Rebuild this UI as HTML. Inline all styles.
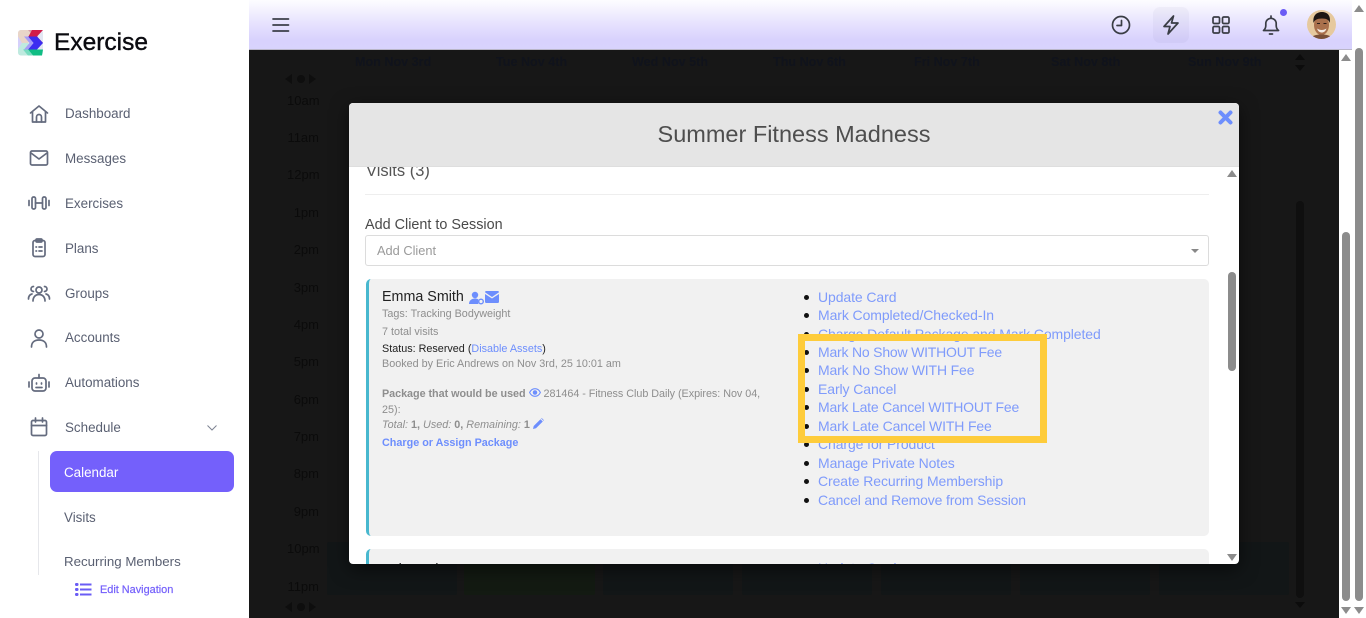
<!DOCTYPE html>
<html lang="en">
<head>
<meta charset="utf-8">
<title>Exercise</title>
<style>
html,body{margin:0;padding:0;width:1366px;height:618px;overflow:hidden;background:#fff;font-family:"Liberation Sans",sans-serif}
.a{position:absolute;white-space:nowrap}
#side{position:absolute;left:0;top:0;width:249px;height:618px;background:#fff}
.nav{position:absolute;left:65px;font-size:13.4px;line-height:20px;color:#5a6072;white-space:nowrap;margin-top:1px}
.ic{position:absolute;left:27px;width:24px;height:24px;fill:none;stroke:#646b7e;stroke-width:1.7;stroke-linecap:round;stroke-linejoin:round}
#top{position:absolute;left:249px;top:0;width:1103px;height:49px;background:linear-gradient(#fdfdff 0,#e8e4fe 22px,#d8d2fd 40px,#d8d3fd 49px);border-bottom:1px solid #b9b6c8}
.tic{position:absolute;width:24px;height:24px;fill:none;stroke:#3a3d45;stroke-width:1.7;stroke-linecap:round;stroke-linejoin:round}
#dark{position:absolute;left:249px;top:50px;width:1090px;height:568px;background:#171717;overflow:hidden}
.day{position:absolute;top:4px;font-size:12.6px;font-weight:bold;color:#10131c;line-height:16px;white-space:nowrap}
.hr{position:absolute;left:38px;width:32px;text-align:right;font-size:13px;color:#0b0b0b;line-height:16px;white-space:nowrap}
.ev{position:absolute;top:492px;height:53px;background:#121617;border-radius:2px}
#modal{position:absolute;left:349px;top:103px;width:890px;height:461px;background:#fff;border-radius:4px;overflow:hidden}
#shadow{position:absolute;left:349px;top:103px;width:890px;height:461px;border-radius:4px;box-shadow:0 5px 18px rgba(0,0,0,.55)}
#mh{position:absolute;left:0;top:0;width:890px;height:63px;background:#e5e5e5;border-bottom:1px solid #dedede;box-sizing:content-box;text-align:center;font-size:23.5px;line-height:62px;color:#4e4e4e;z-index:3}
.lk{color:#6d8efd}
.r{position:absolute;left:469px;font-size:14px;letter-spacing:-.09px;line-height:18px;color:#7f9bfb;white-space:nowrap}
.r:before{content:"";position:absolute;left:-14px;top:7px;width:5px;height:5px;border-radius:50%;background:#111}
.s{font-size:10.8px;line-height:14px;position:absolute;left:33px;white-space:nowrap;color:#8e8e8e}
.sb{position:absolute;background:#8c8c8c;border-radius:5px}
.up,.dn{position:absolute;width:0;height:0;border-left:5px solid transparent;border-right:5px solid transparent}
.up{border-bottom:7px solid #8c8c8c}
.dn{border-top:7px solid #8c8c8c}
</style>
</head>
<body>

<div id="dark">
  <div class="day" style="left:106px">Mon Nov 3rd</div>
  <div class="day" style="left:247px">Tue Nov 4th</div>
  <div class="day" style="left:383px">Wed Nov 5th</div>
  <div class="day" style="left:524px">Thu Nov 6th</div>
  <div class="day" style="left:665px">Fri Nov 7th</div>
  <div class="day" style="left:802px">Sat Nov 8th</div>
  <div class="day" style="left:939px">Sun Nov 9th</div>
  <div class="a" style="left:36px;top:24px;width:0;height:0;border-top:5px solid transparent;border-bottom:5px solid transparent;border-right:7px solid #0e0e0e"></div>
  <div class="a" style="left:48px;top:25px;width:8px;height:8px;border-radius:50%;background:#0e0e0e"></div>
  <div class="a" style="left:60px;top:24px;width:0;height:0;border-top:5px solid transparent;border-bottom:5px solid transparent;border-left:7px solid #0e0e0e"></div>
  <div class="hr" style="top:43px">10am</div>
  <div class="hr" style="top:80px">11am</div>
  <div class="hr" style="top:117px">12pm</div>
  <div class="hr" style="top:155px">1pm</div>
  <div class="hr" style="top:192px">2pm</div>
  <div class="hr" style="top:230px">3pm</div>
  <div class="hr" style="top:267px">4pm</div>
  <div class="hr" style="top:304px">5pm</div>
  <div class="hr" style="top:342px">6pm</div>
  <div class="hr" style="top:379px">7pm</div>
  <div class="hr" style="top:416px">8pm</div>
  <div class="hr" style="top:454px">9pm</div>
  <div class="hr" style="top:491px">10pm</div>
  <div class="hr" style="top:529px">11pm</div>
  <div class="ev" style="left:78px;width:130px"></div>
  <div class="ev" style="left:215px;width:131px;background:#131a12"></div>
  <div class="ev" style="left:354px;width:130px"></div>
  <div class="ev" style="left:493px;width:130px"></div>
  <div class="ev" style="left:632px;width:130px"></div>
  <div class="ev" style="left:771px;width:130px"></div>
  <div class="ev" style="left:910px;width:130px"></div>
  <div class="a" style="left:36px;top:552px;width:0;height:0;border-top:5px solid transparent;border-bottom:5px solid transparent;border-right:7px solid #0e0e0e"></div>
  <div class="a" style="left:48px;top:553px;width:8px;height:8px;border-radius:50%;background:#0e0e0e"></div>
  <div class="a" style="left:60px;top:552px;width:0;height:0;border-top:5px solid transparent;border-bottom:5px solid transparent;border-left:7px solid #0e0e0e"></div>
  <div class="a" style="left:1047px;top:151px;width:8px;height:397px;background:#0f0f0f;border-radius:4px"></div>
  <div class="a" style="left:1046px;top:4px;width:0;height:0;border-left:5px solid transparent;border-right:5px solid transparent;border-bottom:6px solid #0c0c0c"></div>
  <div class="a" style="left:1046px;top:15px;width:0;height:0;border-left:5px solid transparent;border-right:5px solid transparent;border-top:6px solid #0c0c0c"></div>
  <div class="a" style="left:1046px;top:552px;width:0;height:0;border-left:5px solid transparent;border-right:5px solid transparent;border-top:6px solid #0c0c0c"></div>
</div>

<div id="top">
  <svg style="position:absolute;left:20px;top:13px" width="24" height="24" viewBox="0 0 24 24" fill="none" stroke="#3c3f4a" stroke-width="1.7" stroke-linecap="round"><path d="M4 6h15.500M4 12h15.500M4 18h15.500"/></svg>
  <svg class="tic" style="left:860px;top:13px" viewBox="0 0 24 24"><circle cx="12" cy="12" r="8.500"/><path d="M12.500 7.500v5H8"/></svg>
  <div class="a" style="left:904px;top:7px;width:36px;height:36px;border-radius:7px;background:rgba(60,50,110,.04)"></div>
  <svg class="tic" style="left:910px;top:13px" viewBox="0 0 24 24"><path d="M14.500 3 5 13.500h6L9 21l10-11h-6.500z"/></svg>
  <svg class="tic" style="left:960px;top:13px" viewBox="0 0 24 24"><rect x="4" y="4" width="6.500" height="6.500" rx="1.300"/><rect x="13.500" y="4" width="6.500" height="6.500" rx="1.300"/><rect x="4" y="13.500" width="6.500" height="6.500" rx="1.300"/><rect x="13.500" y="13.500" width="6.500" height="6.500" rx="1.300"/></svg>
  <svg class="tic" style="left:1010px;top:13px" viewBox="0 0 24 24"><path d="M4.500 17.500c1.500-1.200 2.300-2.800 2.300-5v-2a5.200 5.200 0 0 1 10.400 0v2c0 2.200.8 3.800 2.300 5z"/><path d="M10.500 21h3M12 3v2"/></svg>
  <div class="a" style="left:1031px;top:9px;width:7px;height:7px;border-radius:50%;background:#6a5cf5"></div>
  <svg style="position:absolute;left:1058px;top:10px" width="29" height="29" viewBox="0 0 29 29">
    <defs><clipPath id="av"><circle cx="14.500" cy="14.500" r="14.500"/></clipPath></defs>
    <g clip-path="url(#av)">
      <rect width="29" height="29" fill="#e6c99e"/>
      <ellipse cx="14.500" cy="15" rx="7.500" ry="10" fill="#a9704c"/>
      <path d="M6.500 13C5.500 5 10 2 15 2s9 3 7.800 11c-1-3-2.800-4.500-7.800-4.500S7.500 10 6.500 13z" fill="#1e1613"/>
      <path d="M10 13.500h3M16.500 13.500h3" stroke="#2b1d17" stroke-width="1.100"/>
      <path d="M10 18.500c3 2 6.500 2 9.500 0-1 3-2.800 4-4.700 4s-3.800-1-4.800-4z" fill="#f4ece4"/>
      <path d="M3 29c2-3.500 6-4.500 11.500-4.500S24 25.500 26 29z" fill="#7a5038"/>
    </g>
  </svg>
</div>

<div id="side">
  <svg style="position:absolute;left:18px;top:30px" width="26" height="26" viewBox="0 0 26 26">
    <rect x="0" y="0" width="25" height="25.500" rx="3" fill="#e3e6f3"/>
    <path d="M0 3a3 3 0 0 1 3-3h7l6 6.500L10 13H0z" fill="#e9d5c8"/>
    <path d="M0 13h10l6 6-6 6.500H3a3 3 0 0 1-3-3z" fill="#bfeadf"/>
    <path d="M0 6.500 4 13 0 19z" fill="#d5d0fb"/>
    <path d="M6 0h8l6 6.500-4 0L10 0z" fill="#d99aa8"/>
    <path d="M14 0h11l-6 6.500 6 6.500h-9l-5.500-6.500z" fill="#d21c4a"/>
    <path d="M10 6.500h9l6 6.500-6 6.500h-9l5.500-6.500z" fill="#3d2df0"/>
    <path d="M10 19.500h15l-1 6h-9z" fill="#0fbd83"/>
    <path d="M6 6.500h4l5.500 6.500-5.500 6.500H6l5.500-6.500z" fill="#a69cf7"/>
    <path d="M5 19.500h5l5 6H10z" fill="#78dcc0"/>
  </svg>
  <div class="a" style="left:54px;top:28px;font-size:24.500px;line-height:30px;color:#0b0b10;-webkit-text-stroke:.4px #0b0b10">Exercise</div>

  <svg class="ic" style="top:102px" viewBox="0 0 24 24"><path d="M3.500 11 12 4l8.500 7M5.500 9.500V20h13V9.500"/><path d="M9.500 20v-5a2.500 2.500 0 0 1 5 0v5"/></svg>
  <div class="nav" style="top:103px">Dashboard</div>
  <svg class="ic" style="top:146px" viewBox="0 0 24 24"><rect x="3.500" y="5" width="17" height="14" rx="1.500"/><path d="M4 7l8 6 8-6"/></svg>
  <div class="nav" style="top:148px">Messages</div>
  <svg class="ic" style="top:191px" viewBox="0 0 24 24"><rect x="5" y="6" width="3.500" height="12" rx="1.500"/><rect x="15.500" y="6" width="3.500" height="12" rx="1.500"/><path d="M8.500 12h7M2 9.500v5M22 9.500v5"/></svg>
  <div class="nav" style="top:193px">Exercises</div>
  <svg class="ic" style="top:236px" viewBox="0 0 24 24"><rect x="6" y="4.500" width="12" height="16" rx="2"/><rect x="9" y="3" width="6" height="3" rx="1"/><path d="M9 11h.5M12 11h3M9 15h.5M12 15h3"/></svg>
  <div class="nav" style="top:238px">Plans</div>
  <svg class="ic" style="top:281px" viewBox="0 0 24 24"><circle cx="12" cy="9" r="3"/><path d="M6 20c0-4 2.500-6.500 6-6.500s6 2.500 6 6.500"/><path d="M6.500 5.500a2.500 2.500 0 0 0 0 5M17.500 5.500a2.500 2.500 0 0 1 0 5M1.500 18c0-3 1.500-4.500 3.500-5M22.500 18c0-3-1.500-4.500-3.500-5"/></svg>
  <div class="nav" style="top:283px">Groups</div>
  <svg class="ic" style="top:326px" viewBox="0 0 24 24"><circle cx="12" cy="8" r="4"/><path d="M4.500 21c0-4.500 3-7 7.500-7s7.500 2.500 7.500 7"/></svg>
  <div class="nav" style="top:327px">Accounts</div>
  <svg class="ic" style="top:371px" viewBox="0 0 24 24"><rect x="5" y="7" width="14" height="13" rx="3"/><path d="M12 3.500V7M2 11v5M22 11v5M9.500 12v1M14.500 12v1M9 16.500h6"/></svg>
  <div class="nav" style="top:372px">Automations</div>
  <svg class="ic" style="top:415px" viewBox="0 0 24 24"><rect x="4.500" y="5.500" width="15" height="15" rx="1.500"/><path d="M4.500 10.500h15M8.500 3v4M15.500 3v4"/></svg>
  <div class="nav" style="top:417px">Schedule</div>
  <svg style="position:absolute;left:206px;top:423px" width="12" height="10" viewBox="0 0 12 10" fill="none" stroke="#7d8392" stroke-width="1"><path d="M1.500 2.500 6 7l4.500-4.500"/></svg>

  <div class="a" style="left:38px;top:451px;width:1px;height:124px;background:#e6e7eb"></div>
  <div class="a" style="left:50px;top:451px;width:184px;height:41px;background:#7460fb;border-radius:7px"></div>
  <div class="nav" style="left:64px;top:462px;color:#fff">Calendar</div>
  <div class="nav" style="left:64px;top:507px">Visits</div>
  <div class="nav" style="left:64px;top:551px;font-size:13.3px">Recurring Members</div>
  <svg style="position:absolute;left:75px;top:582px" width="17" height="15" viewBox="0 0 17 15" fill="#6a5cf5"><rect x="0" y="1" width="3.500" height="3" rx="1.200"/><rect x="0" y="6" width="3.500" height="3" rx="1.200"/><rect x="0" y="11" width="3.500" height="3" rx="1.200"/><rect x="5" y="1.500" width="11.500" height="2"/><rect x="5" y="6.500" width="11.500" height="2"/><rect x="5" y="11.500" width="11.500" height="2"/></svg>
  <div class="a" style="left:100px;top:583px;font-size:10.900px;line-height:14px;color:#7460fb;-webkit-text-stroke:.2px #7460fb">Edit Navigation</div>
</div>

<div id="shadow"></div>
<div id="modal">
  <div id="mh">Summer Fitness Madness</div>
  <svg style="position:absolute;left:869px;top:7px;z-index:4" width="15" height="15" viewBox="0 0 15 15"><path d="M2.500 2.500l10 10M12.500 2.500l-10 10" stroke="#6d8efd" stroke-width="4" stroke-linecap="round"/></svg>

  <div class="a" style="left:17px;top:58px;font-size:16.500px;line-height:20px;color:#555">Visits (3)</div>
  <div class="a" style="left:16px;top:91px;width:844px;height:1px;background:#eee"></div>
  <div class="a" style="left:16px;top:113px;font-size:14.400px;line-height:18px;color:#4a4a4a">Add Client to Session</div>
  <div class="a" style="left:16px;top:132px;width:844px;height:31px;box-sizing:border-box;border:1px solid #dcdcdc;border-radius:3px;background:#fff;font-size:12.800px;line-height:29px;color:#9a9a9a;padding-left:11px">Add Client</div>
  <div class="a" style="left:842px;top:146px;width:0;height:0;border-left:4px solid transparent;border-right:4px solid transparent;border-top:4px solid #888"></div>

  <div class="a" style="left:17px;top:176px;width:843px;height:257px;background:#f1f1f1;border-left:3px solid #48b8cf;border-radius:5px;box-sizing:border-box"></div>
  <div class="a" style="left:33px;top:185px;font-size:14.300px;line-height:18px;color:#222">Emma Smith</div>
  <svg style="position:absolute;left:120px;top:188px" width="15" height="14" viewBox="0 0 15 14" fill="#6d8efd"><circle cx="6" cy="4" r="3.200"/><path d="M0 13c0-3.500 2.500-5.500 6-5.500 1.500 0 2.500.3 3.300.8V13z"/><circle cx="12" cy="10.500" r="2.300" fill="none" stroke="#6d8efd" stroke-width="1.400"/></svg>
  <svg style="position:absolute;left:136px;top:188px" width="14" height="12" viewBox="0 0 14 12" fill="#6d8efd"><path d="M1.200 0h11.600c.7 0 1.200.5 1.200 1.200L7 6 0 1.200C0 .5.500 0 1.200 0z"/><path d="M0 3l7 4.500L14 3v7.800c0 .7-.5 1.200-1.200 1.200H1.200C.5 12 0 11.500 0 10.800z"/></svg>
  <div class="s" style="top:204px">Tags: Tracking Bodyweight</div>
  <div class="s" style="top:222px">7 total visits</div>
  <div class="s" style="top:239px;color:#222">Status: Reserved (<span class="lk">Disable Assets</span>)</div>
  <div class="s" style="top:254px">Booked by Eric Andrews on Nov 3rd, 25 10:01 am</div>
  <div class="s" style="top:284px;letter-spacing:-.04px"><b>Package that would be used</b> <svg width="12" height="9" viewBox="0 0 13 10" style="vertical-align:0"><path d="M.5 5C2 2 4 .8 6.500.8S11 2 12.500 5C11 8 9 9.200 6.500 9.200S2 8 .5 5z" fill="none" stroke="#6d8efd" stroke-width="1.200"/><circle cx="6.500" cy="5" r="2.500" fill="#6d8efd"/></svg> 281464 - Fitness Club Daily (Expires: Nov 04,</div>
  <div class="s" style="top:300px">25):</div>
  <div class="s" style="top:315px"><i>Total:</i> <b>1,</b> <i>Used:</i> <b>0,</b> <i>Remaining:</i> <b>1</b> <svg width="11" height="11" viewBox="0 0 11 11" style="vertical-align:-1px"><path d="M0 11l.7-3L7.500 1.200l2.300 2.300L3 10.300zM8.200.5l.5-.5 2.300 2.300-.5.500z" fill="#6d8efd"/></svg></div>
  <div class="s" style="top:333px;font-weight:bold;color:#6d8efd">Charge or Assign Package</div>

  <div class="r" style="top:185px">Update Card</div>
  <div class="r" style="top:203px">Mark Completed/Checked-In</div>
  <div class="r" style="top:222px">Charge Default Package and Mark Completed</div>
  <div class="r" style="top:240px;letter-spacing:-.2px">Mark No Show WITHOUT Fee</div>
  <div class="r" style="top:258px;letter-spacing:-.15px">Mark No Show WITH Fee</div>
  <div class="r" style="top:277px">Early Cancel</div>
  <div class="r" style="top:295px;letter-spacing:-.2px">Mark Late Cancel WITHOUT Fee</div>
  <div class="r" style="top:314px;letter-spacing:-.15px">Mark Late Cancel WITH Fee</div>
  <div class="r" style="top:332px">Charge for Product</div>
  <div class="r" style="top:351px">Manage Private Notes</div>
  <div class="r" style="top:369px">Create Recurring Membership</div>
  <div class="r" style="top:388px;letter-spacing:-.15px">Cancel and Remove from Session</div>

  <div class="a" style="left:449px;top:231px;width:249px;height:109px;box-sizing:border-box;border:7px solid #fecc3b"></div>

  <div class="a" style="left:17px;top:446px;width:843px;height:30px;background:#f1f1f1;border-left:3px solid #48b8cf;border-radius:5px;box-sizing:border-box"></div>
  <div class="a" style="left:33px;top:458px;font-size:14.300px;line-height:18px;color:#222">Kyle Andrews</div>
  <div class="r" style="top:456px">Update Card</div>

  <div class="up" style="left:878px;top:67px"></div>
  <div class="sb" style="left:879px;top:169px;width:8px;height:99px"></div>
  <div class="dn" style="left:878px;top:451px"></div>
</div>

<div class="a" style="left:1339px;top:50px;width:16px;height:568px;background:#fff"></div>
<div class="up" style="left:1341px;top:54px"></div>
<div class="sb" style="left:1342px;top:232px;width:8px;height:369px"></div>
<div class="dn" style="left:1341px;top:607px"></div>
<div class="a" style="left:1352px;top:0;width:14px;height:618px;background:#fff"></div>
<div class="up" style="left:1354px;top:5px"></div>
<div class="sb" style="left:1355px;top:48px;width:8px;height:553px"></div>
<div class="dn" style="left:1354px;top:607px"></div>

</body>
</html>
